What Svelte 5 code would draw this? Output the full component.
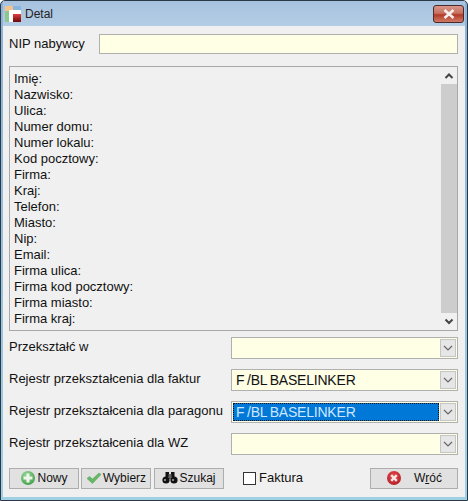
<script>
	const fields = [
		'Imię:', 'Nazwisko:', 'Ulica:', 'Numer domu:', 'Numer lokalu:', 'Kod pocztowy:', 'Firma:', 'Kraj:',
		'Telefon:', 'Miasto:', 'Nip:', 'Email:', 'Firma ulica:', 'Firma kod pocztowy:', 'Firma miasto:', 'Firma kraj:'
	];
	const combos = [
		{ label: 'Przekształć w', value: '' },
		{ label: 'Rejestr przekształcenia dla faktur', value: 'F /BL BASELINKER' },
		{ label: 'Rejestr przekształcenia dla paragonu', value: 'F /BL BASELINKER', focus: true },
		{ label: 'Rejestr przekształcenia dla WZ', value: '' }
	];
</script>

<div class="window">
	<div class="titlebar">
		<svg class="appicon" width="16" height="16" viewBox="0 0 16 16">
			<defs>
				<linearGradient id="redsq" x1="0" y1="0" x2="0" y2="1">
					<stop offset="0%" stop-color="#e04040" />
					<stop offset="100%" stop-color="#6a0808" />
				</linearGradient>
			</defs>
			<rect x="0" y="0" width="8" height="5" fill="#f4c48c" />
			<rect x="8" y="0" width="8" height="4" fill="#88b4e0" />
			<rect x="0" y="5" width="4" height="11" fill="#8cc88c" />
			<rect x="4" y="4" width="12" height="12" rx="1" fill="#fff" />
			<rect x="8" y="8" width="8" height="8" fill="url(#redsq)" />
		</svg>
		<span class="title">Detal</span>
		<div class="close">
			<svg width="14" height="10" viewBox="0 0 14 10">
				<path d="M2.5 1 L11.5 9 M11.5 1 L2.5 9" stroke="#f4f0ee" stroke-width="2.6" />
			</svg>
		</div>
	</div>
	<div class="client">
		<div class="nip">
			<span>NIP nabywcy</span>
			<div class="input"></div>
		</div>
		<div class="memo">
			<div class="lines">
				{#each fields as f}
					<div>{f}</div>
				{/each}
			</div>
			<div class="scroll">
				<svg width="16" height="16" viewBox="0 0 16 16"><path d="M4.5 10 L8 6.5 L11.5 10" fill="none" stroke="#444" stroke-width="2" /></svg>
				<div class="track"></div>
				<svg width="16" height="16" viewBox="0 0 16 16"><path d="M4.5 6.5 L8 10 L11.5 6.5" fill="none" stroke="#444" stroke-width="2" /></svg>
			</div>
		</div>
		<div class="rows">
			{#each combos as c}
				<div class="row">
					<span class="lbl">{c.label}</span>
					<div class="combo">
						<div class="val" class:focus={c.focus}>{c.value}</div>
						<div class="arrow">
							<svg width="10" height="6" viewBox="0 0 10 6"><path d="M1 1 L5 5 L9 1" fill="none" stroke="#666" stroke-width="1.2" /></svg>
						</div>
					</div>
				</div>
			{/each}
		</div>
		<div class="footer">
			<button class="btn b1">
				<svg width="16" height="16" viewBox="0 0 16 16">
					<defs>
						<radialGradient id="grn" cx="40%" cy="30%" r="75%">
							<stop offset="0%" stop-color="#9ad89a" />
							<stop offset="100%" stop-color="#3f9e4a" />
						</radialGradient>
					</defs>
					<circle cx="8" cy="8" r="7" fill="url(#grn)" />
					<path d="M8 3.5 V12.5 M3.5 8 H12.5" stroke="#eef6ea" stroke-width="3" />
				</svg>
				Nowy
			</button>
			<button class="btn b2">
				<svg width="16" height="14" viewBox="0 0 16 14">
					<path d="M1 7.5 L3.5 5.5 L6.5 8 L13 2 L15 3.5 L6.5 12.5 Z" fill="#66b866" stroke="#4c9c52" stroke-width="0.5" />
				</svg>
				Wybierz
			</button>
			<button class="btn b3">
				<svg width="16" height="14" viewBox="0 0 16 14">
					<rect x="3.5" y="1" width="3.5" height="5" fill="#111" />
					<rect x="9" y="1" width="3.5" height="5" fill="#111" />
					<rect x="6.5" y="3" width="3" height="5" fill="#666" />
					<circle cx="4" cy="9" r="3.6" fill="#111" />
					<circle cx="12" cy="9" r="3.6" fill="#111" />
					<circle cx="3" cy="9" r="1" fill="#aaa" />
					<circle cx="11" cy="9" r="1" fill="#aaa" />
				</svg>
				Szukaj
			</button>
			<label class="check"><span class="box"></span>Faktura</label>
			<button class="btn back">
				<svg width="16" height="16" viewBox="0 0 16 16">
					<defs>
						<radialGradient id="rd" cx="45%" cy="35%" r="70%">
							<stop offset="0%" stop-color="#e4484c" />
							<stop offset="100%" stop-color="#b21e26" />
						</radialGradient>
					</defs>
					<circle cx="8" cy="8" r="7" fill="url(#rd)" />
					<path d="M5.2 5.2 L10.8 10.8 M10.8 5.2 L5.2 10.8" stroke="#f6e6e6" stroke-width="2.4" />
				</svg>
				<span>W<u>r</u>óć</span>
			</button>
		</div>
	</div>
</div>

<style>
	:global(body) {
		margin: 0;
		background: #fff;
	}
	.window {
		width: 468px;
		height: 501px;
		box-sizing: border-box;
		display: flex;
		flex-direction: column;
		background: linear-gradient(#8fb2d6, #9fd0e4);
		border: 1px solid #2a3a48;
		border-radius: 5px 5px 0 0;
		padding: 0 2px 3px 2px;
		font: 13px/16px "Liberation Sans", Arial, sans-serif;
		color: #111;
	}
	.titlebar {
		height: 25px;
		flex: none;
		display: flex;
		align-items: center;
		gap: 4px;
		padding-left: 2px;
		position: relative;
		background: linear-gradient(#a7c2de, #b4cde6);
		font-size: 12px;
	}
	.title {
		color: #222;
	}
	.close {
		position: absolute;
		right: 1px;
		top: 4px;
		width: 31px;
		height: 18px;
		box-sizing: border-box;
		border: 1px solid #4a2a2a;
		border-radius: 3px;
		background: linear-gradient(#d8968a 0%, #c8705f 45%, #b33a28 55%, #cf7a66 100%);
		display: flex;
		align-items: center;
		justify-content: center;
	}
	.client {
		flex: 1;
		background: #f0f0f0;
		padding: 8px 7px 0 6px;
		display: flex;
		flex-direction: column;
		min-height: 0;
	}
	.nip {
		display: flex;
		align-items: center;
		justify-content: space-between;
		height: 20px;
	}
	.input {
		width: 359px;
		height: 20px;
		box-sizing: border-box;
		background: #ffffe6;
		border: 1px solid #b0b0b0;
	}
	.memo {
		margin-top: 12px;
		height: 265px;
		box-sizing: border-box;
		border: 1px solid #a8a8a8;
		display: flex;
		justify-content: space-between;
		padding: 4px 0 0 4px;
	}
	.lines {
		line-height: 16px;
	}
	.scroll {
		width: 16px;
		margin-top: -3px;
		margin-bottom: 1px;
		display: flex;
		flex-direction: column;
	}
	.scroll svg {
		flex: none;
	}
	.track {
		flex: 1;
		background: #cdcdcd;
	}
	.rows {
		margin-top: 6px;
		display: flex;
		flex-direction: column;
		gap: 10px;
	}
	.row {
		display: flex;
		align-items: center;
		justify-content: space-between;
		height: 22px;
	}
	.lbl {
		margin-bottom: 2px;
	}
	.combo {
		width: 227px;
		height: 22px;
		box-sizing: border-box;
		border: 1px solid #b0b0b0;
		background: #ffffe6;
		display: flex;
		padding: 1px;
	}
	.val {
		flex: 1;
		font-size: 14px;
		line-height: 18px;
		padding-left: 3px;
		letter-spacing: -0.2px;
		word-spacing: -1px;
	}
	.val.focus {
		background: #0078d7;
		color: #cfe6ff;
		outline: 1px dotted #111;
		outline-offset: -1px;
	}
	.arrow {
		width: 16px;
		margin-left: 1px;
		box-sizing: border-box;
		background: #e6e6e6;
		border: 1px solid #c4c4c4;
		display: flex;
		align-items: center;
		justify-content: center;
	}
	.footer {
		margin-top: 12px;
		height: 22px;
		display: flex;
		align-items: center;
	}
	.btn {
		height: 21px;
		box-sizing: border-box;
		border: 1px solid #adadad;
		background: #e1e1e1;
		font: inherit;
		font-size: 12px;
		color: #111;
		padding: 0;
		display: flex;
		align-items: center;
		justify-content: center;
		gap: 1px;
	}
	.b1 {
		width: 70px;
	}
	.b2 {
		width: 70px;
		margin-left: 2px;
	}
	.b3 {
		width: 70px;
		margin-left: 3px;
	}
	.check {
		margin-left: 19px;
		display: flex;
		align-items: center;
		gap: 3px;
	}
	.box {
		width: 13px;
		height: 13px;
		box-sizing: border-box;
		border: 1px solid #333;
		background: #fff;
	}
	.back {
		width: 88px;
		margin-left: auto;
		gap: 12px;
	}
</style>
